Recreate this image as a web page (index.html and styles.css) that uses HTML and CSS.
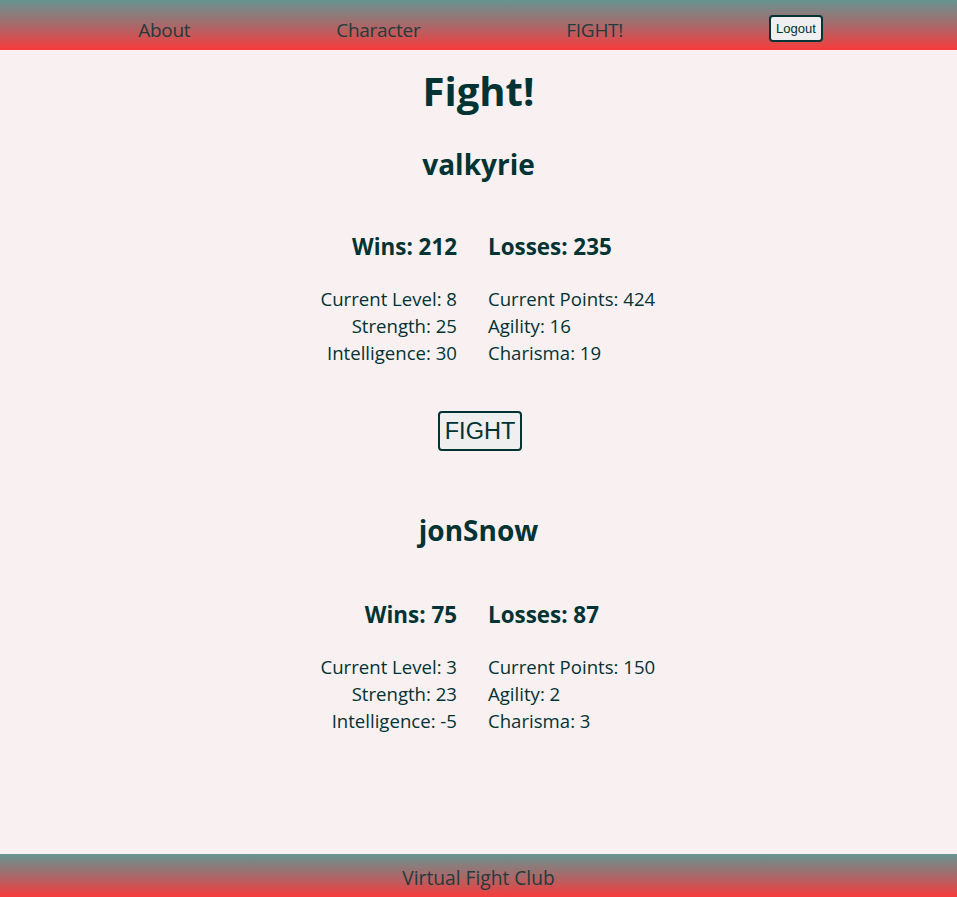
FILE: index.html
```html
<!DOCTYPE html>
<html lang="en">
<head>
<meta charset="utf-8">
<title>Fight!</title>
<link rel="stylesheet" href="styles.css">
</head>
<body>
<nav class="nav">
  <a class="nav-link" href="#">About</a>
  <a class="nav-link" href="#">Character</a>
  <a class="nav-link" href="#">FIGHT!</a>
  <button class="logout">Logout</button>
</nav>
<main class="main">
  <h1 class="title">Fight!</h1>
  <section class="fighter">
    <h2 class="name">valkyrie</h2>
    <div class="record">
      <div class="left">Wins: 212</div>
      <div class="right">Losses: 235</div>
    </div>
    <div class="stats">
      <div class="left">Current Level: 8</div>
      <div class="right">Current Points: 424</div>
      <div class="left">Strength: 25</div>
      <div class="right">Agility: 16</div>
      <div class="left">Intelligence: 30</div>
      <div class="right">Charisma: 19</div>
    </div>
  </section>
  <div class="action"><button class="fight-btn">FIGHT</button></div>
  <section class="fighter second">
    <h2 class="name">jonSnow</h2>
    <div class="record">
      <div class="left">Wins: 75</div>
      <div class="right">Losses: 87</div>
    </div>
    <div class="stats">
      <div class="left">Current Level: 3</div>
      <div class="right">Current Points: 150</div>
      <div class="left">Strength: 23</div>
      <div class="right">Agility: 2</div>
      <div class="left">Intelligence: -5</div>
      <div class="right">Charisma: 3</div>
    </div>
  </section>
</main>
<footer class="footer">Virtual Fight Club</footer>
</body>
</html>
```
FILE: styles.css
```css
* { box-sizing: border-box; }
html, body { margin: 0; padding: 0; }
body {
  background: #f9f0f1;
  color: #003333;
  font-family: "Open Sans", "Noto Sans", sans-serif;
  min-height: 897px;
  display: flex;
  flex-direction: column;
}
.nav {
  height: 50px;
  background: linear-gradient(to bottom, #679490 0%, #a8696b 50%, #f83b3b 100%);
  display: flex;
  align-items: center;
  justify-content: center;
  gap: 146px;
  padding-top: 10px;
  padding-left: 4px;
}
.nav-link {
  color: #213c3c;
  text-decoration: none;
  font-size: 19px;
  line-height: 24px;
  letter-spacing: -0.3px;
}
.logout {
  font-family: "Liberation Sans", Arial, sans-serif;
  font-size: 13px;
  color: #003333;
  background: #efefef;
  border: 2px solid #003333;
  border-radius: 4px;
  height: 27px;
  padding: 0 5px;
  margin-top: -3px;
}
.main { flex: 1; }
.title {
  margin: 14px 0 0;
  text-align: center;
  font-size: 40px;
  line-height: 53px;
  font-weight: 700;
}
.name {
  margin: 29px 0 0;
  text-align: center;
  font-size: 28px;
  line-height: 37px;
  font-weight: 700;
}
.second .name { margin-top: 61px; }
.record, .stats {
  display: grid;
  grid-template-columns: 1fr 1fr;
  column-gap: 31px;
  padding-right: 12px;
}
.record {
  margin-top: 49px;
  font-size: 22.4px;
  line-height: 29px;
  font-weight: 700;
}
.second .record { margin-top: 51px; }
.stats {
  margin-top: 24px;
  font-size: 18.6px;
  line-height: 27px;
}
.left { text-align: right; }
.right { text-align: left; }
.action {
  display: flex;
  justify-content: center;
  margin-top: 45px;
}
.fight-btn {
  font-family: "Liberation Sans", Arial, sans-serif;
  font-size: 23.5px;
  color: #003333;
  background: #efefef;
  border: 2px solid #003333;
  border-radius: 4px;
  height: 40px;
  padding: 0 5px;
  margin-left: 3px;
}
.footer {
  height: 43px;
  background: linear-gradient(to bottom, #679490 0%, #a8696b 50%, #f83b3b 100%);
  text-align: center;
  font-size: 19.2px;
  line-height: 24px;
  padding-top: 12px;
  color: #213c3c;
  letter-spacing: 0;
}
```
